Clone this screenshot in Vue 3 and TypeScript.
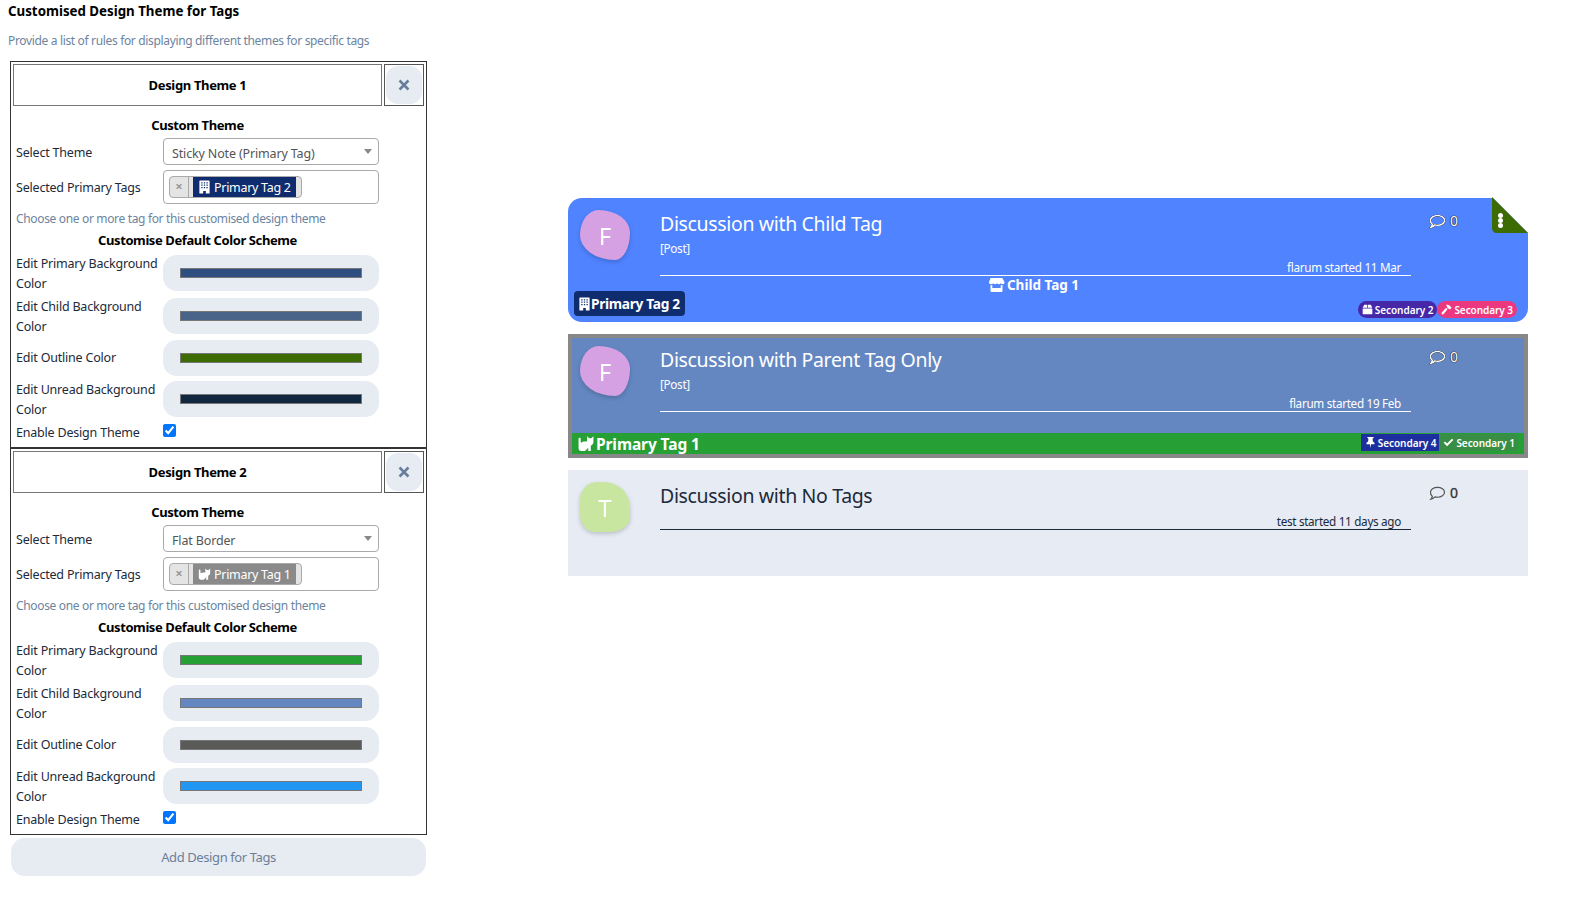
<script setup lang="ts">
interface ColorRow {
  label: string
  color: string
  short?: boolean
}
interface Theme {
  name: string
  select: string
  tag: string
  tagIcon: string
  tagColor: string
  colors: ColorRow[]
}

const icons: Record<string, string> = {
  building: 'M2.5 0h11a.8.8 0 0 1 .8.8V16H9.600v-3H6.400v3H1.700V.8A.8.8 0 0 1 2.500 0zM4 2v1.600h1.600V2zm3.200 0v1.600h1.600V2zm3.200 0v1.600H12V2zM4 5v1.600h1.600V5zm3.200 0v1.600h1.600V5zm3.200 0v1.600H12V5zM4 8v1.600h1.600V8zm3.200 0v1.600h1.600V8zm3.200 0v1.600H12V8z',
  store: 'M2.6 1h10.8c.3 0 .6.2.7.4l1.8 3.3c.5 1.2-.3 2.5-1.7 2.5-.8 0-1.500-.4-1.900-1-.4.6-1.100 1-1.900 1s-1.500-.4-1.900-1c-.4.6-1.100 1-1.900 1s-1.500-.4-1.900-1c-.4.6-1.100 1-1.900 1C.9 7.200.1 5.900.6 4.700l1.300-3.300c.1-.2.400-.4.700-.4zM2 8.300c.6.1 1.300 0 1.800-.2v2.900h8.400V8.100c.5.2 1.200.3 1.800.2V14a1 1 0 0 1-1 1H3a1 1 0 0 1-1-1z',
  box: 'M3.200 1h4.300v4.500H1zm5.300 0h4.300L15 5.500H8.500zM1 6.500h14V14a1 1 0 0 1-1 1H2a1 1 0 0 1-1-1z',
  hammer: 'M7.200 1.500C9 .6 11.200 1 12.600 2.400l2.900 2.900-2.600 2.600-1.300-1.300-1.300.4-1-1c.1-1.800-.7-3.300-2.100-4.500zM7.300 5.600l2.100 2.100L3.600 14.800c-.6.6-1.500.6-2.100 0l-.3-.3c-.6-.6-.6-1.500 0-2.100z',
  thumbtack: 'M4 0h8c.6 0 .9.700.5 1.100L11 2.500l.5 4c1.300.7 2.500 1.800 2.500 3.200 0 .4-.3.700-.7.700H8.800L8 16l-.8-5.600H2.700c-.4 0-.7-.3-.7-.7 0-1.400 1.200-2.500 2.500-3.200l.5-4-1.500-1.400C3.100.7 3.400 0 4 0z',
  check: 'M1 8.500l1.900-1.900 3 3L13.100 2.400 15 4.300l-9.100 9.200z',
  cat: 'M1 3.500c0-.6.400-1 1-1s1 .4 1 1v2.600c0 .5.200.9.600 1.100.7-.8 1.800-1.200 3-1.200H9v-.2L9 1.200 11 3h2l2-1.800v5.500c0 1.700-1.100 3-2.500 3.300V15h-2.400v-3l-3 3H3.500C2 15 1 13.800 1 12.400z',
  times: 'M3.300 .8L8 5.500 12.700 .8l2.500 2.500L10.500 8l4.700 4.700-2.500 2.500L8 10.500 3.300 15.200 .8 12.700 5.500 8 .8 3.300z',
  comment: 'M9 1.500c4 0 7.500 2.200 7.500 5.200S13 12 9 12c-1 0-1.900-.1-2.700-.4-1 .9-2.500 2.100-4.300 2.500.8-.9 1.300-2 1.500-3C2.200 10 1.500 8.400 1.500 6.700 1.500 3.700 5 1.500 9 1.500z',
}

const themes: Theme[] = [
  {
    name: 'Design Theme 1',
    select: 'Sticky Note (Primary Tag)',
    tag: 'Primary Tag 2',
    tagIcon: 'building',
    tagColor: '#0f2d6e',
    colors: [
      { label: 'Edit Primary Background Color', color: '#2f4f80' },
      { label: 'Edit Child Background Color', color: '#4a6389' },
      { label: 'Edit Outline Color', color: '#3d6b04', short: true },
      { label: 'Edit Unread Background Color', color: '#10273f' },
    ],
  },
  {
    name: 'Design Theme 2',
    select: 'Flat Border',
    tag: 'Primary Tag 1',
    tagIcon: 'cat',
    tagColor: '#8a8a8a',
    colors: [
      { label: 'Edit Primary Background Color', color: '#26a034' },
      { label: 'Edit Child Background Color', color: '#6487c2' },
      { label: 'Edit Outline Color', color: '#5a5a58', short: true },
      { label: 'Edit Unread Background Color', color: '#2196f3' },
    ],
  },
]
</script>

<template>
  <div class="page">
    <div class="settings">
      <h1 class="title">Customised Design Theme for Tags</h1>
      <p class="help top-help">Provide a list of rules for displaying different themes for specific tags</p>

      <section v-for="theme in themes" :key="theme.name" class="theme-box">
        <div class="theme-head">
          <div class="theme-name">{{ theme.name }}</div>
          <div class="remove-wrap">
            <button class="remove-btn">
              <svg viewBox="0 0 16 16" class="remove-icon"><path :d="icons.times" /></svg>
            </button>
          </div>
        </div>

        <h2 class="sub first">Custom Theme</h2>
        <div class="row select-row">
          <label>Select Theme</label>
          <div class="select">{{ theme.select }}<span class="caret"></span></div>
        </div>
        <div class="row tag-row">
          <label>Selected Primary Tags</label>
          <div class="tag-input">
            <span class="chip">
              <span class="chip-x">×</span>
              <span class="chip-label" :style="{ background: theme.tagColor }">
                <svg viewBox="0 0 16 16" class="chip-icon"><path :d="icons[theme.tagIcon]" fill-rule="evenodd" /></svg>
                {{ theme.tag }}
              </span>
            </span>
          </div>
        </div>
        <p class="help choose">Choose one or more tag for this customised design theme</p>
        <h2 class="sub">Customise Default Color Scheme</h2>

        <div class="colors">
          <div v-for="c in theme.colors" :key="c.label" class="row color-row" :class="{ short: c.short }">
            <label>{{ c.label }}</label>
            <div class="pill"><span class="swatch" :style="{ background: c.color }"></span></div>
          </div>
        </div>

        <div class="row enable-row">
          <label>Enable Design Theme</label>
          <input type="checkbox" checked />
        </div>
      </section>

      <button class="add-btn">Add Design for Tags</button>
    </div>

    <div class="cards">
      <!-- Sticky note -->
      <article class="card sticky">
        <div class="card-body">
          <div class="avatar blob-f">F</div>
          <div class="main">
            <div class="card-title">Discussion with Child Tag</div>
            <div class="post">[Post]</div>
            <div class="meta">flarum started 11 Mar</div>
          </div>
          <div class="stat">
            <svg viewBox="0 0 18 16" class="comment"><path :d="icons.comment" /></svg>
            <span class="count">0</span>
          </div>
        </div>
        <div class="corner">
          <div class="fold"><span></span><span></span><span></span></div>
        </div>
        <div class="sticky-foot">
          <span class="primary-tag">
            <svg viewBox="0 0 16 16" class="ti"><path :d="icons.building" fill-rule="evenodd" /></svg>Primary Tag 2
          </span>
          <span class="child-tag">
            <svg viewBox="0 0 16 16" class="ti"><path :d="icons.store" /></svg>Child Tag 1
          </span>
          <span class="secondaries">
            <span class="sec round" style="background: #4527a8">
              <svg viewBox="0 0 16 16" class="si"><path :d="icons.box" /></svg>Secondary 2
            </span>
            <span class="sec round" style="background: #ec387e">
              <svg viewBox="0 0 16 16" class="si"><path :d="icons.hammer" /></svg>Secondary 3
            </span>
          </span>
        </div>
      </article>

      <!-- Flat border -->
      <article class="card flat">
        <div class="card-body">
          <div class="avatar blob-f">F</div>
          <div class="main">
            <div class="card-title">Discussion with Parent Tag Only</div>
            <div class="post">[Post]</div>
            <div class="meta">flarum started 19 Feb</div>
          </div>
          <div class="stat">
            <svg viewBox="0 0 18 16" class="comment"><path :d="icons.comment" /></svg>
            <span class="count">0</span>
          </div>
        </div>
        <div class="flat-foot">
          <span class="flat-primary">
            <svg viewBox="0 0 16 16" class="fi"><path :d="icons.cat" /></svg>Primary Tag 1
          </span>
          <span class="secondaries">
            <span class="sec" style="background: #1d2f9e">
              <svg viewBox="0 0 16 16" class="si"><path :d="icons.thumbtack" /></svg>Secondary 4
            </span>
            <span class="sec" style="background: #388e44">
              <svg viewBox="0 0 16 16" class="si"><path :d="icons.check" /></svg>Secondary 1
            </span>
          </span>
        </div>
      </article>

      <!-- No tags -->
      <article class="card plain">
        <div class="card-body">
          <div class="avatar blob-t">T</div>
          <div class="main">
            <div class="card-title">Discussion with No Tags</div>
            <div class="meta">test started 11 days ago</div>
          </div>
          <div class="stat">
            <svg viewBox="0 0 18 16" class="comment"><path :d="icons.comment" /></svg>
            <span class="count">0</span>
          </div>
        </div>
      </article>
    </div>
  </div>
</template>

<style scoped>
.page {
  display: flex;
  width: 1584px;
  height: 916px;
  overflow: hidden;
  background: #fff;
  color: #111;
  font-family: "Noto Sans", "Open Sans", sans-serif;
  font-size: 12.5px;
}

/* Settings column */
.settings {
  flex: 0 0 568px;
  padding: 0 0 0 10px;
  box-sizing: border-box;
}
.title {
  margin: 2px 0 0 -2px;
  font-size: 13.3px;
  line-height: 18px;
  font-weight: 700;
  color: #000;
}
.help {
  margin: 0;
  font-size: 12px;
  line-height: 16px;
  letter-spacing: -0.34px;
  color: #6c84a0;
}
.top-help {
  margin: 13px 0 0 -2px;
  height: 28px;
}
.theme-box {
  width: 417px;
  height: 387px;
  box-sizing: border-box;
  border: 1px solid #333;
  padding: 2px;
}
.theme-head {
  display: flex;
  gap: 2px;
  height: 42px;
}
.theme-name {
  flex: 0 0 369px;
  box-sizing: border-box;
  border: 1px solid #777;
  display: flex;
  align-items: center;
  justify-content: center;
  font-size: 13px;
  font-weight: 700;
  letter-spacing: -0.35px;
  color: #000;
}
.remove-wrap {
  flex: 0 0 40px;
  box-sizing: border-box;
  border: 1px solid #555;
  padding: 1px;
}
.remove-btn {
  display: flex;
  align-items: center;
  justify-content: center;
  width: 100%;
  height: 100%;
  padding: 0;
  border: 0;
  border-radius: 12px;
  background: #e7ecf3;
}
.remove-icon {
  width: 12px;
  height: 12px;
  fill: #667d9b;
}
.sub {
  margin: 5px 0 5px;
  width: 369px;
  text-align: center;
  font-size: 13px;
  line-height: 16px;
  font-weight: 700;
  letter-spacing: -0.4px;
  color: #000;
}
.sub.first {
  margin: 11px 0 5px;
}
.row {
  display: grid;
  grid-template-columns: 147px 216px;
  align-items: center;
  padding-left: 3px;
}
.row label {
  line-height: 20px;
  letter-spacing: -0.2px;
  color: #1c2a3a;
}
.select-row label,
.tag-row label,
.color-row label {
  margin: 1px 0 -1px;
}
.color-row.short label {
  margin: 0;
}
.select {
  position: relative;
  height: 27px;
  box-sizing: border-box;
  border: 1px solid #aaa;
  border-radius: 4px;
  padding: 2px 0 0 8px;
  line-height: 25px;
  font-size: 12.5px;
  letter-spacing: -0.15px;
  color: #555;
}
.caret {
  position: absolute;
  right: 6px;
  top: 10px;
  border-left: 4px solid transparent;
  border-right: 4px solid transparent;
  border-top: 5px solid #888;
}
.tag-row {
  margin-top: 5px;
}
.tag-input {
  height: 34px;
  box-sizing: border-box;
  border: 1px solid #aaa;
  border-radius: 4px;
  padding: 5px;
}
.chip {
  display: inline-flex;
  height: 22px;
  box-sizing: border-box;
  border: 1px solid #aaa;
  border-radius: 4px;
  background: #e4e4e4;
  padding-right: 5px;
  overflow: hidden;
}
.chip-x {
  width: 18px;
  margin-right: 4px;
  border-right: 1px solid #aaa;
  text-align: center;
  line-height: 19px;
  font-size: 13px;
  font-weight: 700;
  color: #999;
}
.chip-label {
  display: flex;
  align-items: center;
  gap: 3px;
  padding: 0 5px;
  color: #fff;
  font-size: 12.5px;
  letter-spacing: -0.3px;
}
.chip-icon {
  width: 13px;
  height: 14px;
  fill: #fff;
}
.choose {
  margin: 7px 0 0 3px;
}
.colors {
  display: flex;
  flex-direction: column;
  gap: 3px;
}
.color-row {
  min-height: 40px;
}
.color-row.short {
  min-height: 37px;
}
.pill {
  display: flex;
  align-items: center;
  height: 36px;
  padding: 0 17px;
  border-radius: 14px;
  background: #e7ecf3;
}
.swatch {
  display: block;
  width: 100%;
  height: 8px;
  border: 1px solid #777;
}
.enable-row {
  margin-top: 4px;
  align-items: start;
}
.enable-row input {
  width: 13px;
  height: 13px;
  margin: 1px 0 0;
}
.add-btn {
  display: block;
  width: 415px;
  height: 38px;
  margin: 3px 0 0 1px;
  border: 0;
  border-radius: 14px;
  background: #e7ecf3;
  color: #6c7f99;
  font: inherit;
  font-size: 13px;
  letter-spacing: -0.4px;
}

/* Discussion cards */
.cards {
  flex: 0 0 960px;
  display: flex;
  flex-direction: column;
  gap: 12px;
  padding-top: 198px;
}
.card {
  position: relative;
  display: flex;
  flex-direction: column;
  height: 124px;
  color: #fff;
}
.sticky {
  background: #5083ff;
  border-radius: 14px 0 14px 14px;
}
.flat {
  background: #6487c2;
  box-shadow: inset 0 0 0 4px #888;
}
.plain {
  height: 106px;
  background: #e7ebf3;
  color: #1c2a3a;
}
.card-body {
  display: flex;
  padding: 12px 0 0 12px;
}
.avatar {
  flex: 0 0 50px;
  height: 50px;
  display: flex;
  align-items: center;
  justify-content: center;
  color: #fff;
  font-size: 24px;
  filter: drop-shadow(0 2px 2px rgba(0, 0, 0, 0.18));
}
.blob-f {
  background: #d6a1e3;
  border-radius: 37% 63% 30% 70% / 50% 45% 55% 50%;
}
.blob-t {
  background: #c8e6a0;
  border-radius: 35% 52% 40% 30% / 35% 50% 30% 35%;
}
.main {
  flex: 0 0 751px;
  margin-left: 30px;
}
.card-title {
  font-size: 19.5px;
  line-height: 28px;
  letter-spacing: -0.35px;
}
.post {
  margin-top: 1px;
  font-size: 11.7px;
  line-height: 18px;
  letter-spacing: -0.3px;
}
.meta {
  height: 19px;
  padding: 2px 10px 0 0;
  box-sizing: border-box;
  border-bottom: 1px solid currentColor;
  text-align: right;
  font-size: 11.7px;
  line-height: 16px;
  letter-spacing: -0.3px;
}
.plain .meta {
  margin-top: 1px;
}
.stat {
  display: flex;
  align-items: center;
  gap: 4px;
  height: 16px;
  margin: 3px 0 0 18px;
}
.comment {
  width: 17px;
  height: 15px;
  fill: none;
  stroke: #fff;
  stroke-width: 1.6;
  filter: drop-shadow(0 0 0.6px #000) drop-shadow(0 0 0.3px #000);
}
.plain .comment {
  stroke: #555;
  stroke-width: 1.3;
  filter: none;
}
.count {
  font-size: 14px;
  line-height: 16px;
  color: #fff;
  text-shadow: 0 0 1px #000, 0 0 1px #000;
}
.plain .count {
  color: #333;
  text-shadow: 0 0 1px #777;
}

/* Sticky note parts */
.corner {
  position: absolute;
  top: -1px;
  right: 0;
  width: 36px;
  height: 36px;
}
.corner::before {
  content: "";
  position: absolute;
  inset: 0;
  background: #fff;
  clip-path: polygon(0 0, 100% 0, 100% 100%);
}
.fold {
  position: absolute;
  inset: 0;
  padding: 16px 0 0 6px;
  box-sizing: border-box;
  background: #3d6b04;
  clip-path: path("M0 0 L36 36 H5 Q0 36 0 31 Z");
}
.fold span {
  display: block;
  width: 5px;
  height: 5px;
  border-radius: 50%;
  background: #fff;
}
.sticky-foot {
  flex: 1;
  display: grid;
  grid-template-columns: 1fr auto 1fr;
  padding: 0 11px 4px 6px;
}
.primary-tag {
  justify-self: start;
  align-self: end;
  display: flex;
  align-items: center;
  height: 25px;
  margin-bottom: 2px;
  padding: 0 5px 0 4px;
  border-radius: 4px;
  background: #0f2d6e;
  font-size: 13.7px;
  font-weight: 700;
  letter-spacing: -0.3px;
}
.ti {
  width: 13px;
  height: 16px;
  fill: #fff;
}
.child-tag {
  display: flex;
  align-items: center;
  gap: 2px;
  height: 17px;
  margin-right: 24px;
  font-size: 13.5px;
  font-weight: 700;
}
.child-tag .ti {
  width: 17px;
  height: 16px;
}
.secondaries {
  justify-self: end;
  align-self: end;
  display: flex;
}
.sec {
  display: flex;
  align-items: center;
  gap: 2px;
  height: 17px;
  padding: 0 5px;
  font-size: 10px;
  font-weight: 600;
  letter-spacing: -0.05px;
  white-space: nowrap;
}
.sec.round {
  padding: 0 4px;
  border-radius: 9px;
}
.si {
  width: 11px;
  height: 11px;
  fill: #fff;
}

/* Flat border parts */
.flat-foot {
  display: flex;
  justify-content: space-between;
  height: 21px;
  margin: auto 4px 4px;
  padding: 0 6px 0 5px;
  background: #26a034;
}
.flat-primary {
  display: flex;
  align-items: center;
  gap: 1px;
  font-size: 15.5px;
  font-weight: 700;
  letter-spacing: -0.1px;
}
.fi {
  width: 18px;
  height: 17px;
  fill: #fff;
}
.flat-foot .secondaries {
  align-self: start;
  margin-top: 1px;
}
.flat-foot .sec {
  padding: 0 3px 0 4px;
}
</style>

<style>
html,
body {
  margin: 0;
  background: #fff;
}
</style>
